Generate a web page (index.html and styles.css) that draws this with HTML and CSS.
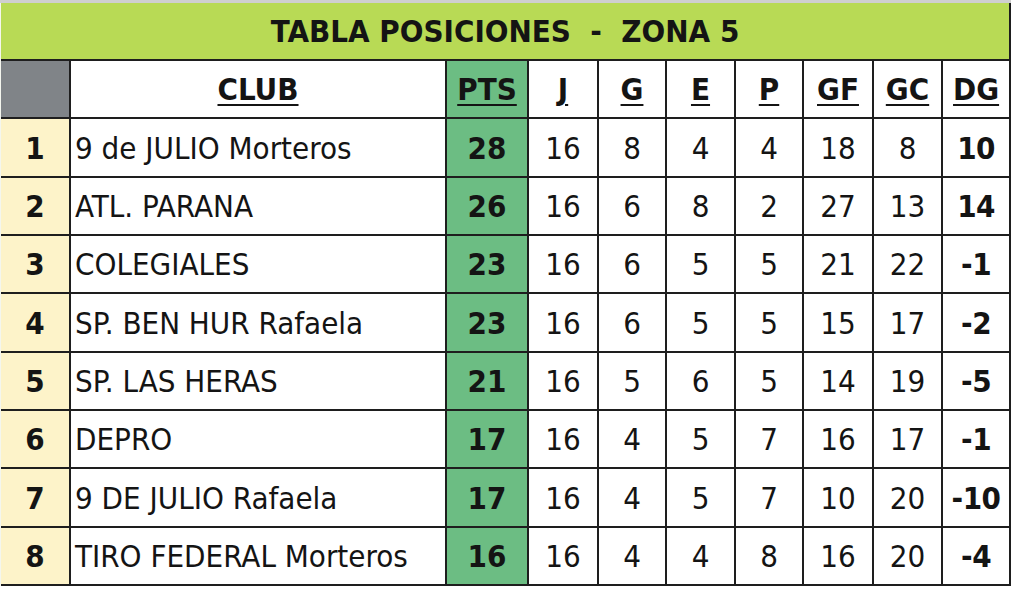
FILE: index.html
```html
<!DOCTYPE html>
<html lang="es">
<head>
<meta charset="utf-8">
<title>Tabla Posiciones - Zona 5</title>
<link rel="stylesheet" href="styles.css">
</head>
<body>
<div class="sheet">
<table class="standings">
  <colgroup>
    <col class="c-pos"><col class="c-club"><col class="c-pts"><col class="c-j"><col class="c-g"><col class="c-e"><col class="c-p"><col class="c-gf"><col class="c-gc"><col class="c-dg">
  </colgroup>
  <thead>
    <tr class="title-row"><th colspan="10" class="title">TABLA POSICIONES&nbsp; - &nbsp;ZONA 5</th></tr>
    <tr class="head-row">
      <th class="corner"></th>
      <th><u>CLUB</u></th>
      <th class="pts"><u>PTS</u></th>
      <th><u>J</u></th>
      <th><u>G</u></th>
      <th><u>E</u></th>
      <th><u>P</u></th>
      <th><u>GF</u></th>
      <th><u>GC</u></th>
      <th><u>DG</u></th>
    </tr>
  </thead>
  <tbody>
    <tr><td class="pos">1</td><td class="club">9 de JULIO Morteros</td><td class="pts">28</td><td>16</td><td>8</td><td>4</td><td>4</td><td>18</td><td>8</td><td class="dg">10</td></tr>
    <tr><td class="pos">2</td><td class="club">ATL. PARANA</td><td class="pts">26</td><td>16</td><td>6</td><td>8</td><td>2</td><td>27</td><td>13</td><td class="dg">14</td></tr>
    <tr><td class="pos">3</td><td class="club">COLEGIALES</td><td class="pts">23</td><td>16</td><td>6</td><td>5</td><td>5</td><td>21</td><td>22</td><td class="dg">-1</td></tr>
    <tr><td class="pos">4</td><td class="club">SP. BEN HUR Rafaela</td><td class="pts">23</td><td>16</td><td>6</td><td>5</td><td>5</td><td>15</td><td>17</td><td class="dg">-2</td></tr>
    <tr><td class="pos">5</td><td class="club">SP. LAS HERAS</td><td class="pts">21</td><td>16</td><td>5</td><td>6</td><td>5</td><td>14</td><td>19</td><td class="dg">-5</td></tr>
    <tr><td class="pos">6</td><td class="club">DEPRO</td><td class="pts">17</td><td>16</td><td>4</td><td>5</td><td>7</td><td>16</td><td>17</td><td class="dg">-1</td></tr>
    <tr><td class="pos">7</td><td class="club">9 DE JULIO Rafaela</td><td class="pts">17</td><td>16</td><td>4</td><td>5</td><td>7</td><td>10</td><td>20</td><td class="dg">-10</td></tr>
    <tr><td class="pos">8</td><td class="club">TIRO FEDERAL Morteros</td><td class="pts">16</td><td>16</td><td>4</td><td>4</td><td>8</td><td>16</td><td>20</td><td class="dg">-4</td></tr>
  </tbody>
</table>
</div>
</body>
</html>
```

FILE: styles.css
```css
html, body {
  margin: 0;
  padding: 0;
  background: #ffffff;
}

.sheet {
  width: 1010px;
  border-top: 3px solid #cfcfcf;
  padding-left: 1px;
  background: #f4f6ee;
}

.standings {
  border-collapse: collapse;
  table-layout: fixed;
  width: 1009px;
  font-family: "DejaVu Sans Condensed", "DejaVu Sans", Tahoma, sans-serif;
  font-size: 31px;
  color: #141414;
}

.c-pos { width: 69px; }
.c-club { width: 376px; }
.c-pts { width: 82px; }
.c-j { width: 70px; }
.c-g { width: 68px; }
.c-e { width: 69px; }
.c-p { width: 68px; }
.c-gf { width: 70px; }
.c-gc { width: 69px; }
.c-dg { width: 68px; }

.standings th,
.standings td {
  border: 2px solid #1e1e1e;
  padding: 0;
  text-align: center;
  vertical-align: middle;
  height: 56.35px;
  line-height: 36px;
  white-space: nowrap;
}

.standings th {
  font-weight: bold;
}

.standings th u {
  text-decoration-thickness: 2px;
  text-underline-offset: 4px;
}

.title-row .title {
  height: 56px;
  background: #b8da55;
  border-top: none;
  border-left: none;
  font-size: 31px;
}

.head-row th {
  background: #ffffff;
}

.head-row .corner {
  background: #808488;
  border-left: none;
}

.standings .pts {
  background: #6cbd83;
  font-weight: bold;
}

.standings td {
  background: #ffffff;
}

.standings td.pts {
  background: #6cbd83;
}

.standings td.pos {
  background: #fdf3c9;
  font-weight: bold;
  border-left: none;
}

.standings td.club {
  text-align: left;
  padding-left: 4px;
}

.standings td.dg {
  font-weight: bold;
  letter-spacing: -0.5px;
}
```
